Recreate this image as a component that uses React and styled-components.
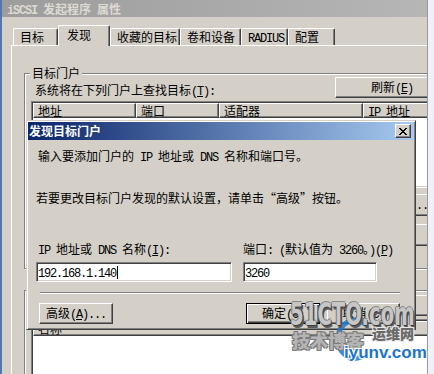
import React from "react"
import styled, { createGlobalStyle } from "styled-components"

const GlobalStyle = createGlobalStyle`
  html, body { margin: 0; padding: 0; background: #d4d0c8; }
  body {
    font-family: "Noto Sans CJK SC", "Liberation Sans", sans-serif;
    font-size: 12px;
    color: #000;
  }
  * { box-sizing: border-box; }
`

const Screen = styled.div`
  position: relative;
  width: 434px;
  height: 374px;
  display: flex;
  overflow: hidden;
  background: #d4d0c8;
`

const DeskEdge = styled.div`
  flex: 0 0 2px;
  background: #5277aa;
`

const Window = styled.div`
  flex: 0 0 425px;
  display: flex;
  flex-direction: column;
  overflow: hidden;
  background: #d4d0c8;
`

const RightStrip = styled.div`
  flex: 1;
  background: #eef2f8;
  border-left: 1px solid #9a9a9a;
`

const TitleBar = styled.div`
  flex: none;
  height: 17px;
  padding-left: 5px;
  background: linear-gradient(90deg, #9c9c9c, #b6b6b6);
  color: #dddad2;
  font-weight: bold;
  line-height: 17px;
  white-space: nowrap;
`

const Body = styled.div`
  flex: 1;
  padding: 8px 0 0 9px;
`

const TabStrip = styled.div`
  position: relative;
  z-index: 1;
  display: flex;
  align-items: flex-end;
  height: 20px;
  margin-left: 2px;
`

const Tab = styled.div`
  flex: none;
  width: ${p => p.$w}px;
  height: ${p => (p.$active ? 21 : 17)}px;
  margin-bottom: ${p => (p.$active ? -1 : 0)}px;
  padding-left: ${p => (p.$active ? 8 : 6)}px;
  line-height: ${p => (p.$active ? 18 : 16)}px;
  background: #d4d0c8;
  border: 1px solid;
  border-color: #fff #404040 transparent #fff;
  border-bottom: none;
  box-shadow: inset -1px 0 0 #808080;
  border-top-left-radius: 2px;
  border-top-right-radius: 2px;
  white-space: nowrap;
`

const Panel = styled.div`
  width: 470px;
  height: 400px;
  border-top: 1px solid #fff;
  border-left: 1px solid #fff;
  padding: 20px 0 0 12px;
`

const Group = styled.fieldset`
  width: 440px;
  margin: ${p => p.$mt || 0}px 0 0;
  padding: 0 0 ${p => p.$pb || 0}px 5px;
  border: 1px solid #808080;
  box-shadow: inset 1px 1px 0 #fff, 1px 1px 0 #fff;
  min-inline-size: 0;
`

const Legend = styled.legend`
  padding: 0 2px;
  line-height: 14px;
  background: #d4d0c8;
`

const ActionRow = styled.div`
  display: grid;
  grid-template-columns: 305px 114px;
  align-items: end;
  margin-top: ${p => p.$mt}px;
`

const RowLabel = styled.div`
  padding-left: 5px;
  margin-bottom: -2px;
  line-height: 15px;
  white-space: nowrap;
`

const Button = styled.button`
  width: ${p => p.$w || 114}px;
  height: ${p => p.$h || 21}px;
  padding: 0;
  font: inherit;
  line-height: 14px;
  color: #000;
  background: #d4d0c8;
  white-space: nowrap;
  overflow: hidden;
  border: 1px solid;
  border-color: ${p => (p.$default ? "#000" : "#fff #404040 #404040 #fff")};
  box-shadow: ${p =>
    p.$default
      ? "inset 1px 1px 0 #fff, inset -1px -1px 0 #404040, inset -2px -2px 0 #808080"
      : "inset -1px -1px 0 #808080"};
`

const ListView = styled.div`
  margin: ${p => p.$mt}px 0 0 1px;
  padding: 1px;
  background: #fff;
  border: 1px solid;
  border-color: #808080 #fff #fff #808080;
  box-shadow: inset 1px 1px 0 #404040, inset -1px -1px 0 #d4d0c8;
`

const HeaderRow = styled.div`
  display: flex;
  height: 15px;
`

const HeaderCell = styled.div`
  flex: 0 0 ${p => p.$w}px;
  padding-left: 4px;
  line-height: 13px;
  background: #d4d0c8;
  border: 1px solid;
  border-color: #fff #404040 #404040 #fff;
  box-shadow: inset -1px -1px 0 #808080;
  white-space: nowrap;
`

const ListBody = styled.div`
  height: ${p => p.$h}px;
`

/* dialog lying over the property sheet */
const Dialog = styled.div`
  position: absolute;
  left: 26px;
  top: 120px;
  width: 390px;
  height: 210px;
  display: flex;
  flex-direction: column;
  padding: 1px;
  background: #d4d0c8;
  border: 1px solid;
  border-color: #d4d0c8 #404040 #404040 #d4d0c8;
  box-shadow: inset 1px 1px 0 #fff, inset -1px -1px 0 #808080;
  z-index: 2;
`

const DialogTitle = styled.div`
  flex: none;
  height: 18px;
  display: flex;
  align-items: center;
  justify-content: space-between;
  padding: 0 3px 0 1px;
  background: linear-gradient(90deg, #0a246a, #a6caf0);
  color: #fff;
  font-weight: bold;
  line-height: 14px;
`

const CloseBtn = styled.div`
  width: 16px;
  height: 14px;
  display: flex;
  align-items: center;
  justify-content: center;
  background: #d4d0c8;
  border: 1px solid;
  border-color: #fff #404040 #404040 #fff;
  box-shadow: inset -1px -1px 0 #808080;
`

const DialogBody = styled.div`
  flex: 1;
  padding: 9px 0 0 8px;
`

const Para = styled.div`
  margin-top: ${p => p.$mt || 0}px;
  padding-left: ${p => p.$pl || 0}px;
  line-height: 14px;
  white-space: nowrap;
`

const FieldGrid = styled.div`
  display: grid;
  grid-template-columns: 196px 134px;
  column-gap: 11px;
  row-gap: 4px;
  margin-top: 37px;
`

const FieldLabel = styled.div`
  padding-left: ${p => p.$pl || 0}px;
  line-height: 14px;
  white-space: nowrap;
`

const TextBox = styled.div`
  height: 20px;
  padding-left: 1px;
  line-height: 18px;
  background: #fff;
  border: 1px solid;
  border-color: #808080 #fff #fff #808080;
  box-shadow: inset 1px 1px 0 #404040, inset -1px -1px 0 #d4d0c8;
  white-space: nowrap;
`

const Caret = styled.span`
  display: inline-block;
  width: 1px;
  height: 13px;
  margin-left: 1px;
  background: #000;
  vertical-align: -2px;
`

const Separator = styled.div`
  width: 360px;
  height: 2px;
  margin: 10px 0 0 4px;
  border-top: 1px solid #808080;
  border-bottom: 1px solid #fff;
`

const Footer = styled.div`
  display: flex;
  justify-content: space-between;
  width: 361px;
  margin: 9px 0 0 3px;
`

const ButtonPair = styled.div`
  display: flex;
  gap: 7px;
`

const Lat = styled.span`
  font-family: "Liberation Mono", monospace;
  font-size: 12px;
  letter-spacing: -1.2px;
`

/* 51CTO / iyunv watermark stamped on the screenshot */
const Watermark = styled.div`
  position: absolute;
  left: 288px;
  top: 298px;
  width: 146px;
  height: 76px;
  z-index: 3;
  pointer-events: none;
`

const WmBig = styled.div`
  position: absolute;
  left: 2px;
  top: 1px;
  font: 900 24px "DejaVu Sans", sans-serif;
  line-height: 1;
  color: #c6c6c6;
  transform: scale(0.82, 1.3);
  transform-origin: top left;
  white-space: nowrap;
  text-shadow:
    1px 1px 0 #3c3c3c, 2px 2px 0 #5c5c5c,
    -1px 0 0 #6a6a6a, 0 -1px 0 #8a8a8a;
`

const WmCn = styled.div`
  position: absolute;
  left: ${p => p.$x}px;
  top: ${p => p.$y}px;
  font-size: ${p => p.$size}px;
  font-weight: 900;
  line-height: 1;
  color: ${p => p.$color};
  white-space: nowrap;
  text-shadow:
    1px 1px 0 ${p => p.$shade}, -1px -1px 0 ${p => p.$shade},
    1px -1px 0 ${p => p.$shade}, -1px 1px 0 ${p => p.$shade};
`

const WmSite = styled.div`
  position: absolute;
  left: 56px;
  top: 46px;
  font: bold 17px "Liberation Sans", sans-serif;
  line-height: 1;
  color: #1c74d2;
  text-shadow: 1px 1px 0 #fff, -1px -1px 0 #fff, 1px -1px 0 #fff, -1px 1px 0 #fff;
`

const Swirl = styled.svg`
  position: absolute;
  left: 44px;
  top: 19px;
`

function T({ s }) {
  const parts = s.split(/([\x20-\x7e]+)/)
  return parts.map((p, i) => {
    if (!p) return null
    if (i % 2 === 0) return <React.Fragment key={i}>{p}</React.Fragment>
    const bits = p.split(/&(.)/)
    return <Lat key={i}>{bits.map((b, j) => (j % 2 ? <u key={j}>{b}</u> : b))}</Lat>
  })
}

const xRows = ["XX....XX", ".XX..XX.", "..XXXX..", "...XX...", "..XXXX..", ".XX..XX.", "XX....XX"]

function CloseGlyph() {
  return (
    <svg width="8" height="7" viewBox="0 0 8 7" shapeRendering="crispEdges">
      {xRows.flatMap((row, y) =>
        row.split("").map((c, x) => (c === "X" ? <rect key={y + "-" + x} x={x} y={y} width="1" height="1" fill="#000" /> : null))
      )}
    </svg>
  )
}

const tabs = [
  { label: "目标", w: 45 },
  { label: "发现", w: 52, active: true },
  { label: "收藏的目标", w: 70 },
  { label: "卷和设备", w: 61 },
  { label: "RADIUS", w: 47 },
  { label: "配置", w: 47 },
]

const portalCols = [
  { label: "地址", w: 103 },
  { label: "端口", w: 83 },
  { label: "适配器", w: 144 },
  { label: "IP 地址", w: 100 },
]

export default function App() {
  return (
    <>
      <GlobalStyle />
      <Screen lang="zh-CN">
        <DeskEdge />
        <Window>
          <TitleBar><T s="iSCSI 发起程序 属性" /></TitleBar>
          <Body>
            <TabStrip>
              {tabs.map(t => (
                <Tab key={t.label} $w={t.w} $active={t.active}><T s={t.label} /></Tab>
              ))}
            </TabStrip>
            <Panel>
              <Group $pb={22}>
                <Legend>目标门户</Legend>
                <ActionRow $mt={-3}>
                  <RowLabel><T s="系统将在下列门户上查找目标(&T):" /></RowLabel>
                  <Button><T s="刷新(&E)" /></Button>
                </ActionRow>
                <ListView $mt={3}>
                  <HeaderRow>
                    {portalCols.map(c => (
                      <HeaderCell key={c.label} $w={c.w}><T s={c.label} /></HeaderCell>
                    ))}
                  </HeaderRow>
                  <ListBody $h={68} />
                </ListView>
                <ActionRow $mt={6}>
                  <RowLabel><T s="若要添加目标门户，请单击“发现门户”。" /></RowLabel>
                  <Button $h={22}><T s="发现门户(&P)..." /></Button>
                </ActionRow>
                <ActionRow $mt={8}>
                  <RowLabel><T s="若要删除目标门户，请选择地址后单击“删除”。" /></RowLabel>
                  <Button $h={22}><T s="删除(&R)" /></Button>
                </ActionRow>
              </Group>
              <Group $mt={13}>
                <Legend><T s="iSNS 服务器" /></Legend>
                <ActionRow $mt={-3}>
                  <RowLabel><T s="系统已在下列 iSNS 服务器上注册(&I):" /></RowLabel>
                  <Button><T s="刷新(&F)" /></Button>
                </ActionRow>
                <ListView $mt={3}>
                  <HeaderRow>
                    <HeaderCell $w={430}>名称</HeaderCell>
                  </HeaderRow>
                  <ListBody $h={60} />
                </ListView>
              </Group>
            </Panel>
          </Body>
        </Window>
        <RightStrip />

        <Dialog>
          <DialogTitle>
            <span>发现目标门户</span>
            <CloseBtn><CloseGlyph /></CloseBtn>
          </DialogTitle>
          <DialogBody>
            <Para $pl={2}><T s="输入要添加门户的 IP 地址或 DNS 名称和端口号。" /></Para>
            <Para $mt={26}><T s="若要更改目标门户发现的默认设置，请单击“高级”按钮。" /></Para>
            <FieldGrid>
              <FieldLabel $pl={2}><T s="IP 地址或 DNS 名称(&I):" /></FieldLabel>
              <FieldLabel><T s="端口: (默认值为 3260。)(&P)" /></FieldLabel>
              <TextBox><Lat>192.168.1.140</Lat><Caret /></TextBox>
              <TextBox><Lat>3260</Lat></TextBox>
            </FieldGrid>
            <Separator />
            <Footer>
              <Button $w={74}><T s="高级(&A)..." /></Button>
              <ButtonPair>
                <Button $w={74} $default><T s="确定(O)" /></Button>
                <Button $w={73}><T s="取消(C)" /></Button>
              </ButtonPair>
            </Footer>
          </DialogBody>
        </Dialog>

        <Watermark>
          <Swirl width="40" height="46" viewBox="0 0 40 46">
            <path d="M33 7 A17 19 0 1 0 29 40" fill="none" stroke="#1b78d0" strokeWidth="5" strokeLinecap="round" opacity="0.85" />
          </Swirl>
          <WmBig>51CTO.com</WmBig>
          <WmCn $x={4} $y={33} $size={18} $color="#b4b4b4" $shade="#7a7a7a">技术博客</WmCn>
          <WmCn $x={84} $y={28} $size={14} $color="#6a6a6a" $shade="#e8e8e8">运维网</WmCn>
          <WmSite>iyunv.com</WmSite>
        </Watermark>
      </Screen>
    </>
  )
}
